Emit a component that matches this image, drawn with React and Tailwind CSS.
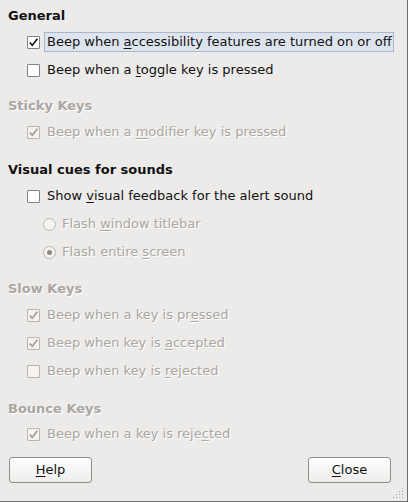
import React from "react";

const FONT = { fontFamily: '"DejaVu Sans", "Liberation Sans", sans-serif' };

function Check({ checked, disabled }) {
  return (
    <span
      className={
        "w-[13px] h-[13px] shrink-0 flex items-center justify-center rounded-[1px] border " +
        (disabled ? "border-[#b9b6b2] bg-[#f4f3f2]" : "border-[#858380] bg-white")
      }
    >
      {checked && (
        <svg width="11" height="11" viewBox="0 0 11 11">
          <path
            d="M1.8 5.6 L4.3 8.3 L9.4 1.8"
            fill="none"
            stroke={disabled ? "#9e9b98" : "#1a1a1a"}
            strokeWidth="1.7"
          />
        </svg>
      )}
    </span>
  );
}

function Radio({ checked }) {
  return (
    <span className="w-[13px] h-[13px] shrink-0 rounded-full border border-[#b9b6b2] bg-[#f4f3f2] flex items-center justify-center">
      {checked && <span className="w-[5px] h-[5px] rounded-full bg-[#8d8a87]" />}
    </span>
  );
}

function Label({ pre, u, post, disabled, focus }) {
  return (
    <span
      className={
        "h-[20px] flex items-center pl-[2px] pr-[1px] border whitespace-pre " +
        (focus ? "border-[#a9b6cc] bg-[#dde4ee] " : "border-transparent ") +
        (disabled ? "text-[#aaa6a2] [text-shadow:1px_1px_0_#ffffff]" : "text-[#111]")
      }
    >
      {pre}
      <u className="underline decoration-1 underline-offset-[2px]">{u}</u>
      {post}
    </span>
  );
}

function CheckRow({ checked, disabled, focus, pre, u, post }) {
  return (
    <div className="h-[28px] flex items-center pl-[19px] gap-[4px]">
      <Check checked={checked} disabled={disabled} />
      <Label pre={pre} u={u} post={post} disabled={disabled} focus={focus} />
    </div>
  );
}

function RadioRow({ checked, pre, u, post }) {
  return (
    <div className="h-[28px] flex items-center pl-[35px] gap-[3px]">
      <Radio checked={checked} />
      <Label pre={pre} u={u} post={post} disabled />
    </div>
  );
}

function Heading({ children, disabled, className = "" }) {
  return (
    <div
      className={
        "h-[20px] leading-[20px] font-bold " +
        (disabled ? "text-[#aaa6a2] [text-shadow:1px_1px_0_#ffffff] " : "text-[#111] ") +
        className
      }
    >
      {children}
    </div>
  );
}

function Button({ u, post }) {
  return (
    <div className="w-[83px] h-[26px] rounded-[3px] border border-[#8f8d8a] bg-gradient-to-b from-[#ffffff] to-[#eeedeb] flex items-center justify-center text-[#111] shadow-[inset_0_1px_0_#ffffff]">
      <span>
        <u className="underline decoration-1 underline-offset-[2px]">{u}</u>
        {post}
      </span>
    </div>
  );
}

export default function App() {
  return (
    <div
      className="w-[408px] h-[502px] bg-[#edebe9] border-r border-b border-[#6f6d6b] text-[13px] relative overflow-hidden"
      style={FONT}
    >
      <div className="flex flex-col pl-[8px] pt-[6px]">
        <Heading>General</Heading>
        <div className="mt-[2px] flex flex-col">
          <CheckRow checked focus pre="Beep when " u="a" post="ccessibility features are turned on or off" />
          <CheckRow pre="Beep when a " u="t" post="oggle key is pressed" />
        </div>

        <Heading disabled className="mt-[12px]">Sticky Keys</Heading>
        <div className="mt-[2px] flex flex-col">
          <CheckRow checked disabled pre="Beep when a " u="m" post="odifier key is pressed" />
        </div>

        <Heading className="mt-[14px]">Visual cues for sounds</Heading>
        <div className="mt-[2px] flex flex-col">
          <CheckRow pre="Show " u="v" post="isual feedback for the alert sound" />
          <RadioRow pre="Flash " u="w" post="indow titlebar" />
          <RadioRow checked pre="Flash entire " u="s" post="creen" />
        </div>

        <Heading disabled className="mt-[13px]">Slow Keys</Heading>
        <div className="mt-[2px] flex flex-col">
          <CheckRow checked disabled pre="Beep when a key is pr" u="e" post="ssed" />
          <CheckRow checked disabled pre="Beep when key is " u="a" post="ccepted" />
          <CheckRow disabled pre="Beep when key is " u="r" post="ejected" />
        </div>

        <Heading disabled className="mt-[14px]">Bounce Keys</Heading>
        <div className="mt-[1px] flex flex-col">
          <CheckRow checked disabled pre="Beep when a key is reje" u="c" post="ted" />
        </div>

        <div className="mt-[9px] ml-[1px] w-[382px] flex justify-between">
          <Button u="H" post="elp" />
          <Button u="C" post="lose" />
        </div>
      </div>

      <svg className="absolute right-[2px] bottom-[2px]" width="12" height="12" viewBox="0 0 12 12">
        {[
          [10, 2], [10, 5], [7, 5], [10, 8], [7, 8], [4, 8], [10, 11], [7, 11], [4, 11], [1, 11],
        ].map(([x, y], i) => (
          <rect key={i} x={x - 1} y={y - 1} width="1" height="1" fill="#a5a29f" />
        ))}
      </svg>
    </div>
  );
}
